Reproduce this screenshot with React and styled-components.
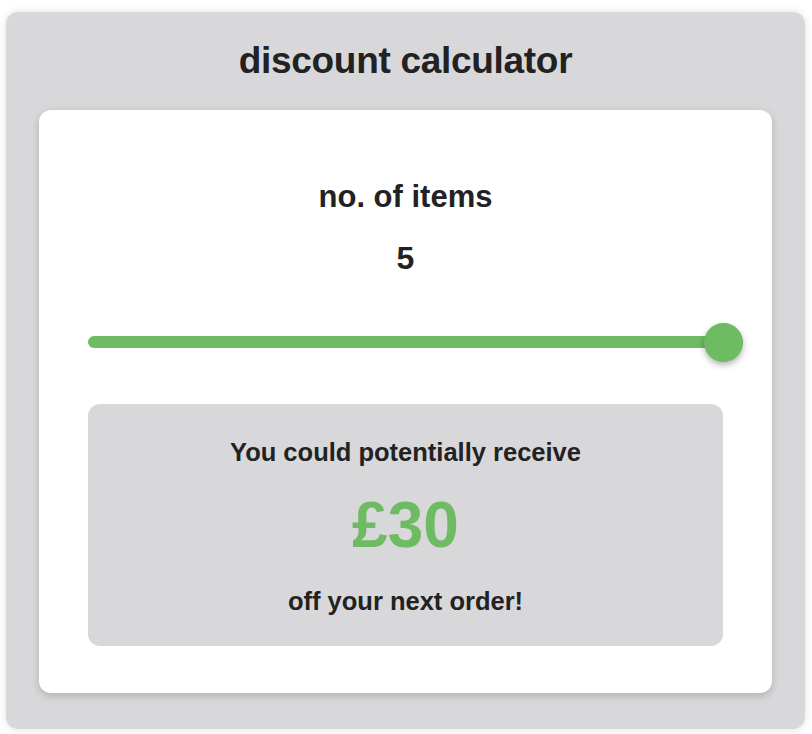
import React, { useState } from "react";
import styled, { createGlobalStyle } from "styled-components";

const Global = createGlobalStyle`
  html, body { margin: 0; padding: 0; background: #ffffff; }
  body { font-family: "Liberation Sans", Arial, Helvetica, sans-serif; color: #222222; }
`;

const Page = styled.div`
  padding: 12px 7px 5px 6px;
`;

const Panel = styled.section`
  background: #d8d8da;
  border-radius: 12px;
  box-shadow: 0 0 8px rgba(0, 0, 0, 0.12);
  padding: 0 33px 36px 33px;
`;

const Title = styled.h1`
  margin: 0;
  height: 98px;
  display: flex;
  align-items: center;
  justify-content: center;
  font-size: 37px;
  font-weight: 700;
  letter-spacing: -0.3px;
  color: #222222;
`;

const Card = styled.div`
  background: #ffffff;
  border-radius: 12px;
  box-shadow: 0 3px 8px rgba(0, 0, 0, 0.18);
  padding: 71px 49px 47px 49px;
  display: flex;
  flex-direction: column;
  align-items: center;
`;

const Label = styled.div`
  font-size: ${(p) => p.$size}px;
  font-weight: 700;
  line-height: 1;
  color: ${(p) => p.$color || "#222222"};
  text-align: center;
  white-space: nowrap;
`;

const SliderWrap = styled.div`
  align-self: stretch;
  margin: 48px -20px 0 0;
  height: 40px;
  display: flex;
  align-items: center;
`;

const Range = styled.input`
  -webkit-appearance: none;
  appearance: none;
  width: 100%;
  height: 40px;
  margin: 0;
  background: transparent;
  outline: none;

  &::-webkit-slider-runnable-track {
    height: 12px;
    border-radius: 6px;
    background: #6fbb63;
  }
  &::-webkit-slider-thumb {
    -webkit-appearance: none;
    appearance: none;
    width: 39px;
    height: 39px;
    border-radius: 50%;
    background: #6fbb63;
    margin-top: -13.5px;
    box-shadow: 0 3px 6px rgba(0, 0, 0, 0.3);
    cursor: pointer;
  }
  &::-moz-range-track {
    height: 12px;
    border-radius: 6px;
    background: #6fbb63;
  }
  &::-moz-range-thumb {
    width: 39px;
    height: 39px;
    border: none;
    border-radius: 50%;
    background: #6fbb63;
    box-shadow: 0 3px 6px rgba(0, 0, 0, 0.3);
  }
`;

const Result = styled.div`
  align-self: stretch;
  margin-top: 42px;
  background: #d8d8da;
  border-radius: 12px;
  height: 242px;
  display: flex;
  flex-direction: column;
  align-items: center;
  justify-content: flex-start;
`;

const Spacer = styled.div`
  height: ${(p) => p.$h}px;
  flex-shrink: 0;
`;

export default function App() {
  const [items, setItems] = useState(5);
  const discount = items * 6;
  return (
    <>
      <Global />
      <Page>
        <Panel>
          <Title>discount calculator</Title>
          <Card>
            <Label $size={31}>no. of items</Label>
            <Spacer $h={30} />
            <Label $size={32}>{items}</Label>
            <SliderWrap>
              <Range
                type="range"
                min={1}
                max={5}
                value={items}
                onChange={(e) => setItems(Number(e.target.value))}
              />
            </SliderWrap>
            <Result>
              <Spacer $h={36} />
              <Label $size={25.5}>You could potentially receive</Label>
              <Spacer $h={27} />
              <Label $size={64} $color="#6fbb63">£{discount}</Label>
              <Spacer $h={32} />
              <Label $size={25.5}>off your next order!</Label>
            </Result>
          </Card>
        </Panel>
      </Page>
    </>
  );
}
